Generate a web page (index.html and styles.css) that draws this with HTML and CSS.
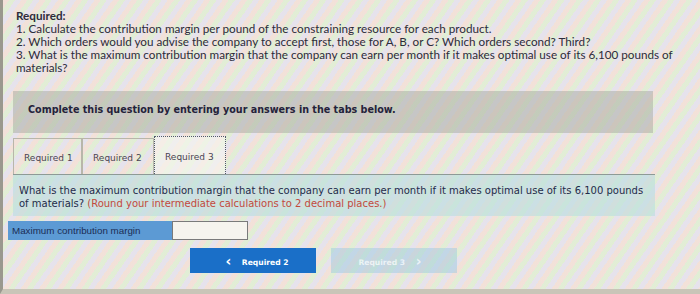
FILE: index.html
```html
<!DOCTYPE html>
<html lang="en">
  <head>
    <meta charset="UTF-8" />
    <meta name="viewport" content="width=device-width, initial-scale=1" />
    <title>Required 3</title>
    <link rel="stylesheet" href="styles.css">
  </head>
  <body>
    <div class="page">
      <div class="required">
        <strong>Required:</strong>
        <ol>
          <li>1. Calculate the contribution margin per pound of the constraining resource for each product.</li>
          <li>2. Which orders would you advise the company to accept first, those for A, B, or C? Which orders second? Third?</li>
          <li>3. What is the maximum contribution margin that the company can earn per month if it makes optimal use of its 6,100 pounds of materials?</li>
        </ol>
      </div>

      <div class="instructions">Complete this question by entering your answers in the tabs below.</div>

      <div class="tabs">
        <div class="tab">Required 1</div>
        <div class="tab">Required 2</div>
        <div class="tab active">Required 3</div>
      </div>

      <div class="panel">
        What is the maximum contribution margin that the company can earn per month if it makes optimal use of its 6,100 pounds of materials?
        <span class="hint">(Round your intermediate calculations to 2 decimal places.)</span>
      </div>

      <div class="answer-row">
        <label class="answer-label" for="cm">Maximum contribution margin</label>
        <input class="answer-input" id="cm" type="text">
      </div>

      <div class="nav">
        <button class="nav-btn prev"><span class="chev">&lsaquo;</span> Required 2</button>
        <button class="nav-btn next">Required 3 <span class="chev">&rsaquo;</span></button>
      </div>
    </div>
  </body>
</html>
```

FILE: styles.css
```css
html,
body {
  margin: 0;
  height: 100%;
}
body {
  background: #e9e7dc;
  font-family: "DejaVu Sans", Verdana, sans-serif;
}
.page {
  height: 289px;
  border-left: 3px solid #9a988e;
  border-bottom: 5px solid #c9c5b8;
  background:
    repeating-linear-gradient(
      125deg,
      rgba(244, 214, 206, 0.55) 0 5px,
      rgba(214, 236, 200, 0.55) 5px 10px,
      rgba(220, 214, 242, 0.5) 10px 15px
    ),
    #f0efe6;
}
.required {
  padding: 9px 0 0 13px;
  font-family: Lato, "Liberation Sans", sans-serif;
  font-size: 11.7px;
  line-height: 13px;
  color: #2d2c3a;
}
.required ol {
  margin: 0;
  padding: 0;
  list-style: none;
}
.instructions {
  margin: 17px 0 0 10px;
  width: 640px;
  height: 42px;
  box-sizing: border-box;
  padding: 13px 15px 0;
  background: rgba(165, 170, 160, 0.5);
  font-weight: bold;
  font-size: 9.6px;
  color: #24223a;
}
.tabs {
  display: flex;
  margin: 3px 0 0 10px;
  width: 642px;
  height: 38px;
  border-bottom: 1px solid #8e9a96;
}
.tab {
  display: flex;
  align-items: center;
  box-sizing: border-box;
  padding: 3px 0 0 10px;
  border: 1px solid #b8b6aa;
  border-bottom: none;
  font-size: 9px;
  color: #4a4452;
  margin-top: 2px;
}
.tab:nth-child(1) {
  width: 69px;
}
.tab:nth-child(2) {
  width: 72px;
}
.tab.active {
  width: 72px;
  margin-top: 0;
  border: 1px dotted #50586a;
  border-bottom: none;
  background: rgba(246, 246, 240, 0.6);
}
.panel {
  margin-left: 10px;
  width: 642px;
  height: 41px;
  box-sizing: border-box;
  padding: 9px 8px 0 6px;
  background: rgba(185, 222, 224, 0.6);
  font-size: 10px;
  line-height: 13px;
  color: #1f2b4a;
}
.hint {
  color: #c24a3c;
}
.answer-row {
  display: flex;
  margin: 5px 0 0 5px;
  height: 19px;
}
.answer-label {
  width: 164px;
  box-sizing: border-box;
  padding: 4px 4px 0;
  background: #5c9ad4;
  font-family: "Liberation Sans", Arial, sans-serif;
  font-size: 9.8px;
  color: #1b2d55;
}
.answer-input {
  width: 76px;
  box-sizing: border-box;
  margin: 0;
  border: 1px solid #7a7a7a;
  background: #f6f4ee;
}
.nav {
  display: flex;
  gap: 15px;
  margin: 8px 0 0 187px;
}
.nav-btn {
  width: 126px;
  height: 25px;
  border: none;
  font-family: "DejaVu Sans", Verdana, sans-serif;
  font-weight: bold;
  font-size: 7.6px;
  color: #fff;
}
.prev {
  background: #1a6fc8;
}
.next {
  background: rgba(150, 200, 225, 0.45);
  color: rgba(255, 255, 255, 0.7);
}
.chev {
  font-size: 14px;
  margin: 0 8px;
  vertical-align: -1px;
}
```
